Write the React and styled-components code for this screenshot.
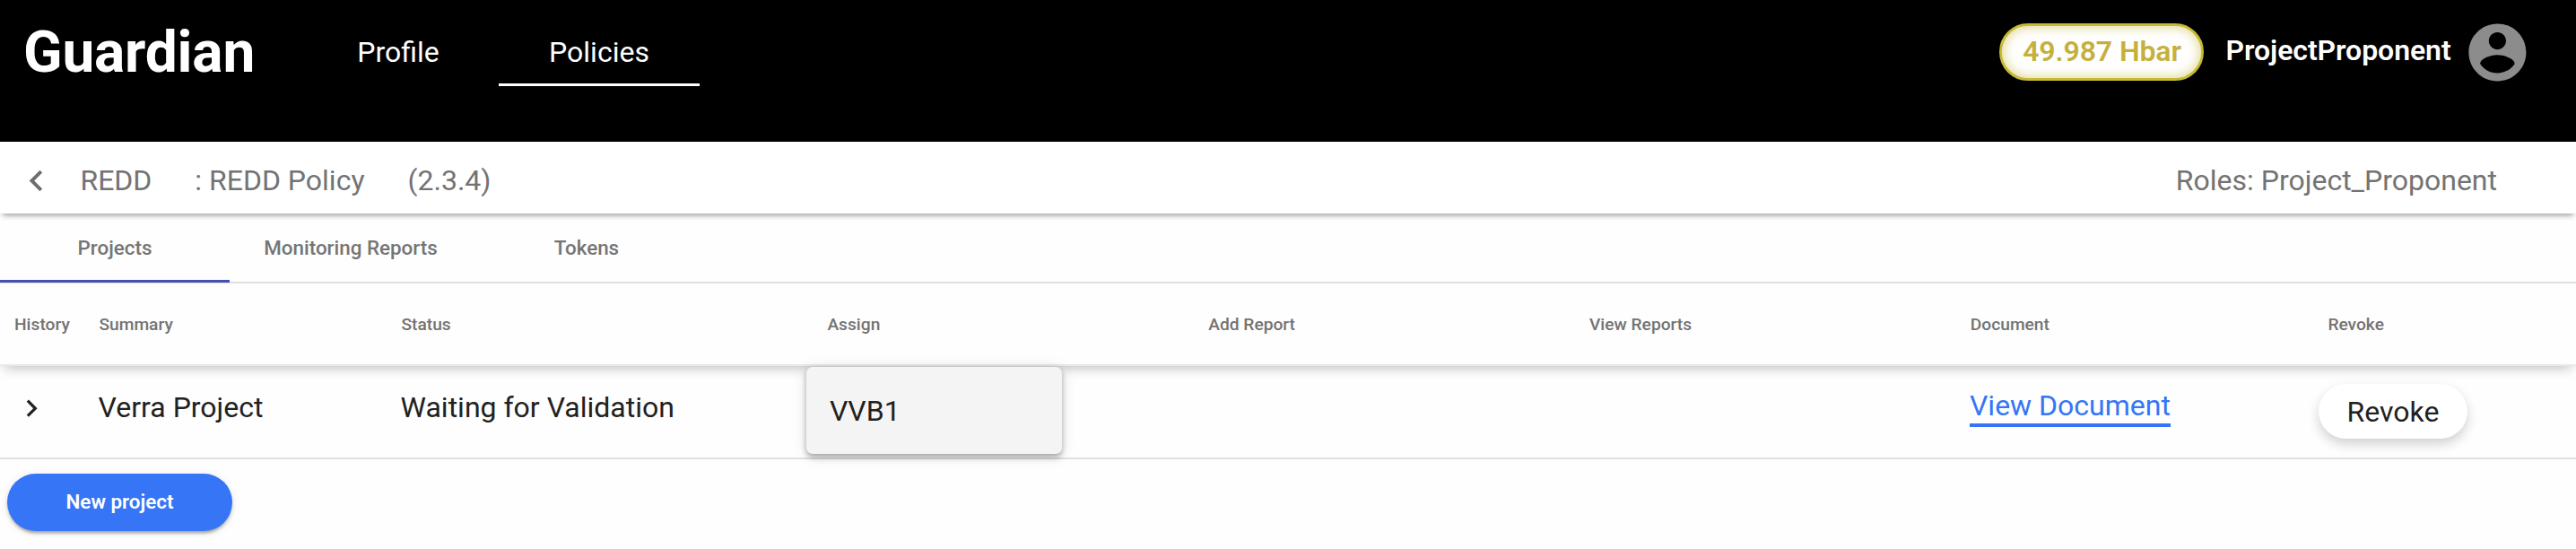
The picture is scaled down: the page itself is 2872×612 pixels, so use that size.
import React from "react";
import styled, { createGlobalStyle } from "styled-components";

const Global = createGlobalStyle`
  * { box-sizing: border-box; }
  body {
    margin: 0;
    background: #fefefe;
    color: #212121;
    font-family: Roboto, "Liberation Sans", sans-serif;
  }
  button { font-family: inherit; border: 0; padding: 0; }
`;

const Page = styled.div`
  min-height: 612px;
  font-size: 32px;
  line-height: 40px;
  white-space: nowrap;
`;

const Header = styled.header`
  display: flex;
  align-items: center;
  height: 158px;
  padding: 0 49.6px 42px 26px;
  background: #000;
  color: #fff;
`;

const Logo = styled.div`
  width: 306px;
  padding-top: 1px;
  font-size: 64px;
  line-height: 76px;
  font-weight: 700;
  letter-spacing: -0.2px;
`;

const Nav = styled.nav`
  display: flex;
  flex: 1;
`;

const NavItem = styled.a`
  display: flex;
  align-items: center;
  justify-content: center;
  width: 224px;
  height: 76px;
  border: solid ${(p) => (p.$active ? "#fff" : "transparent")};
  border-width: 0 0 3px;
  padding-top: 2px;
`;

const Balance = styled.div`
  display: flex;
  align-items: center;
  justify-content: center;
  width: 228px;
  height: 64px;
  margin-right: 24px;
  padding-bottom: 2px;
  border: 3px solid #c6b936;
  border-radius: 32px;
  background: #fff;
  box-shadow: inset 0 0 14px rgba(198, 185, 54, 0.65);
  color: #c6b03c;
  font-weight: 600;
  letter-spacing: -0.1px;
`;

const UserName = styled.div`
  margin-right: 13px;
  padding-bottom: 4px;
  font-weight: 600;
  letter-spacing: -0.06px;
`;

const Avatar = styled.svg`
  width: 76.8px;
  height: 76.8px;
  fill: #8c8c8c;
`;

const PolicyBar = styled.div`
  display: flex;
  align-items: center;
  gap: 48px;
  height: 80px;
  padding: 6px 88px 0 16.8px;
  background: #fff;
  box-shadow: 0 5px 6px -3px rgba(0, 0, 0, 0.4);
  color: #737373;
`;

const BackIcon = styled.svg`
  width: 47px;
  height: 47px;
  margin-right: -22.4px;
  fill: #6e6e6e;
`;

const Roles = styled.div`
  margin-left: auto;
`;

const Tabs = styled.div`
  display: flex;
  height: 78px;
  border-bottom: 2px solid #e0e0e0;
`;

const Tab = styled.div`
  display: flex;
  align-items: center;
  justify-content: center;
  width: ${(p) => p.$width}px;
  height: 77px;
  padding-top: 2px;
  border: solid ${(p) => (p.$active ? "#4350b0" : "transparent")};
  border-width: 0 0 3px;
  color: #757575;
  font-size: 22.4px;
  font-weight: 500;
`;

const TableRow = styled.div`
  display: grid;
  grid-template-columns: 94.4px 337px 475px 424.8px 424.8px 424.8px 398.6px 1fr;
  padding-left: 15.2px;
`;

const HeadRow = styled(TableRow)`
  align-items: center;
  height: 92px;
  padding: 1px 0 0 16px;
  border-bottom: 2px solid #e9e9e9;
  box-shadow: 0 8px 12px -5px rgba(0, 0, 0, 0.23);
  color: #737373;
  font-size: 19.2px;
  font-weight: 500;
`;

const BodyRow = styled(TableRow)`
  height: 104px;
  border-bottom: 2px solid #e0e0e0;
`;

const Cell = styled.div`
  display: flex;
  align-items: center;
  height: 92px;
`;

const ExpandIcon = styled.svg`
  width: 38.4px;
  height: 38.4px;
  margin: 2px 0 0 0.8px;
  fill: #212121;
`;

const AssignOption = styled.div`
  flex: none;
  display: flex;
  align-items: center;
  width: 285px;
  height: 97px;
  margin: 7px 0 0 -22.2px;
  padding-left: 25.6px;
  border-radius: 7px;
  background: #f4f4f4;
  box-shadow:
    0 3.2px 6.4px -1.6px rgba(0, 0, 0, 0.24),
    0 4.8px 7px rgba(0, 0, 0, 0.12),
    0 1.6px 16px rgba(0, 0, 0, 0.12);
`;

const DocumentLink = styled.a`
  border-bottom: 4px solid #3575f6;
  color: #3575f6;
`;

const RevokeButton = styled.button`
  width: 166px;
  height: 61px;
  margin: 9px 0 0 -9.6px;
  border-radius: 31px;
  background: #fff;
  box-shadow: 0 6px 13px rgba(0, 0, 0, 0.18);
  color: #212121;
  font-size: 32px;
  line-height: 40px;
`;

const NewProjectButton = styled.button`
  display: block;
  width: 251px;
  height: 64px;
  margin: 16px 0 0 8px;
  border-radius: 32px;
  background: #3575f6;
  box-shadow:
    0 4.8px 3px -3.2px rgba(0, 0, 0, 0.2),
    0 3.2px 3.2px rgba(0, 0, 0, 0.14),
    0 1.6px 8px rgba(0, 0, 0, 0.12);
  color: #fff;
  font-size: 22.4px;
  line-height: 62px;
  padding-bottom: 2px;
  font-weight: 600;
`;

const columns = ["History", "Summary", "Status", "Assign", "Add Report", "View Reports", "Document", "Revoke"];

export default function App() {
  return (
    <Page>
      <Global />
      <Header>
        <Logo>Guardian</Logo>
        <Nav>
          <NavItem>Profile</NavItem>
          <NavItem $active>Policies</NavItem>
        </Nav>
        <Balance>49.987 Hbar</Balance>
        <UserName>ProjectProponent</UserName>
        <Avatar viewBox="0 0 24 24">
          <path d="M12 2C6.48 2 2 6.48 2 12s4.48 10 10 10 10-4.48 10-10S17.52 2 12 2zm0 3c1.66 0 3 1.34 3 3s-1.34 3-3 3-3-1.34-3-3 1.34-3 3-3zm0 14.2c-2.5 0-4.71-1.28-6-3.22.03-1.99 4-3.08 6-3.08 1.99 0 5.97 1.09 6 3.08-1.29 1.94-3.5 3.22-6 3.22z" />
        </Avatar>
      </Header>

      <PolicyBar>
        <BackIcon viewBox="0 0 24 24">
          <path d="M15.41 7.41L14 6l-6 6 6 6 1.41-1.41L10.83 12z" />
        </BackIcon>
        <span>REDD</span>
        <span>: REDD Policy</span>
        <span>(2.3.4)</span>
        <Roles>Roles: Project_Proponent</Roles>
      </PolicyBar>

      <Tabs>
        <Tab $width={256} $active>Projects</Tab>
        <Tab $width={270}>Monitoring Reports</Tab>
        <Tab $width={256}>Tokens</Tab>
      </Tabs>

      <HeadRow>
        {columns.map((name) => (
          <span key={name}>{name}</span>
        ))}
      </HeadRow>
      <BodyRow>
        <Cell>
          <ExpandIcon viewBox="0 0 24 24">
            <path d="M10 6L8.59 7.41 13.17 12l-4.58 4.59L10 18l6-6z" />
          </ExpandIcon>
        </Cell>
        <Cell>Verra Project</Cell>
        <Cell>Waiting for Validation</Cell>
        <Cell>
          <AssignOption>VVB1</AssignOption>
        </Cell>
        <Cell />
        <Cell />
        <Cell>
          <DocumentLink>View Document</DocumentLink>
        </Cell>
        <Cell>
          <RevokeButton>Revoke</RevokeButton>
        </Cell>
      </BodyRow>

      <NewProjectButton>New project</NewProjectButton>
    </Page>
  );
}
